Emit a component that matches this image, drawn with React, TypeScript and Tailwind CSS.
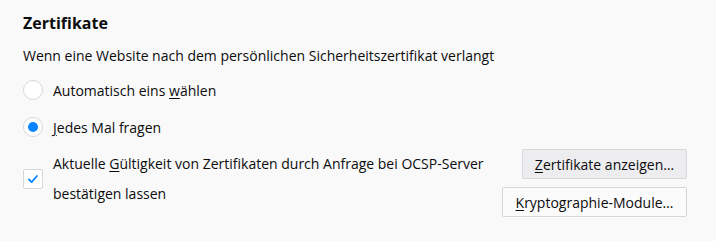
const Radio = ({ checked }: { checked?: boolean }) => (
  <span className="flex h-5 w-5 shrink-0 items-center justify-center rounded-full border border-[#d7d7db] bg-white">
    {checked && <span className="h-[10px] w-[10px] rounded-full bg-[#0a84ff]" />}
  </span>
);

const App = () => {
  return (
    <div
      className="h-[241px] w-[716px] bg-[#f9f9fa] pl-[23px] pr-[29px] pt-[11px] text-[14px] text-[#0c0c0d]"
      style={{ fontFamily: '"Open Sans", "Noto Sans", sans-serif' }}
    >
      <h2 className="text-[16px] font-bold leading-6">Zertifikate</h2>
      <p className="mt-[11px] leading-5">Wenn eine Website nach dem persönlichen Sicherheitszertifikat verlangt</p>

      <div className="mt-[14px] flex h-5 items-center gap-[10px]">
        <Radio />
        <span>
          Automatisch eins <u className="underline-offset-2">w</u>ählen
        </span>
      </div>
      <div className="mt-[17px] flex h-5 items-center gap-[10px]">
        <Radio checked />
        <span>
          <u className="underline-offset-2">J</u>edes Mal fragen
        </span>
      </div>

      <div className="mt-[12px] flex items-start justify-between">
        <div className="flex items-center gap-[10px]">
          <span className="flex h-5 w-5 shrink-0 items-center justify-center rounded-[2px] border border-[#d7d7db] bg-white">
            <svg width="12" height="12" viewBox="0 0 12 12" fill="none">
              <path d="M2 6.5l2.6 2.6L10 3" stroke="#0a84ff" strokeWidth="1.8" strokeLinecap="round" strokeLinejoin="round" />
            </svg>
          </span>
          <span className="whitespace-nowrap leading-[30px]">
            Aktuelle <u className="underline-offset-2">G</u>ültigkeit von Zertifikaten durch Anfrage bei OCSP-Server
            <br />
            bestätigen lassen
          </span>
        </div>
        <div className="flex flex-col items-end gap-2">
          <button className="h-[30px] w-[165px] rounded-[2px] border border-[#d7d7db] bg-[#ededf0]">
            <u className="underline-offset-2">Z</u>ertifikate anzeigen…
          </button>
          <button className="h-[30px] w-[185px] rounded-[2px] border border-[#d7d7db] bg-[#fbfbfb]">
            <u className="underline-offset-2">K</u>ryptographie-Module…
          </button>
        </div>
      </div>
    </div>
  );
};

export default App;
